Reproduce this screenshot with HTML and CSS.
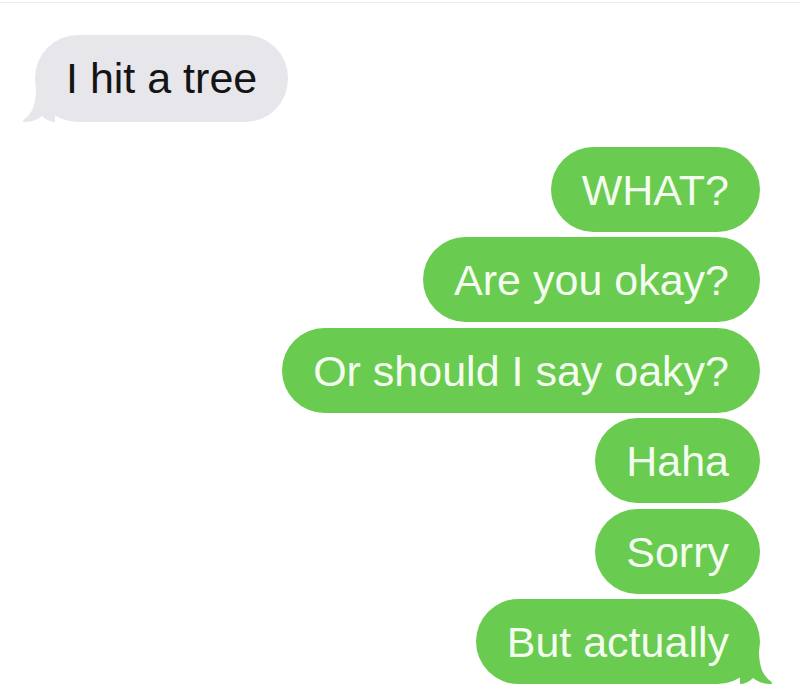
FILE: index.html
```html
<!DOCTYPE html>
<html>
<head>
<meta charset="utf-8">
<link rel="stylesheet" href="styles.css">
</head>
<body>
<div class="screen">
  <div class="topline"></div>
  <div class="thread">
    <div class="row in">
      <div class="bubble gray">I hit a tree
        <svg class="tail tail-left" viewBox="0 0 34 34" width="34" height="34"><path d="M15 0 C15 17 11 26 3 31.5 C1.5 32.5 1.5 34 3.5 34 C10 34 16 32 21 28 C25 32 30 34 34 34 L34 0 Z" fill="#e6e6eb"/></svg>
      </div>
    </div>
    <div class="outgoing">
      <div class="bubble green">WHAT?</div>
      <div class="bubble green">Are you okay?</div>
      <div class="bubble green">Or should I say oaky?</div>
      <div class="bubble green">Haha</div>
      <div class="bubble green">Sorry</div>
      <div class="bubble green">But actually
        <svg class="tail tail-right" viewBox="0 0 34 34" width="34" height="34"><path d="M19 0 C19 17 23 26 31 31.5 C32.5 32.5 32.5 34 30.5 34 C24 34 18 32 13 28 C9 32 4 34 0 34 L0 0 Z" fill="#69cb50"/></svg>
      </div>
    </div>
  </div>
</div>
</body>
</html>
```

FILE: styles.css
```css
html, body {
  margin: 0;
  padding: 0;
  background: #ffffff;
}

.screen {
  width: 800px;
  height: 693px;
  overflow: hidden;
  background: #ffffff;
  font-family: "Liberation Sans", Arial, Helvetica, sans-serif;
}

.topline {
  height: 2px;
  border-bottom: 1px solid #ececec;
}

.thread {
  display: flex;
  flex-direction: column;
  padding: 32px 40px 0 35px;
}

.row {
  display: flex;
}

.outgoing {
  display: flex;
  flex-direction: column;
  align-items: flex-end;
  gap: 5.4px;
  margin-top: 25px;
}

.bubble {
  position: relative;
  font-size: 43px;
  line-height: 50px;
  border-radius: 43px;
  white-space: nowrap;
}

.gray {
  background: #e6e6eb;
  color: #141414;
  padding: 18px 31px 19px 31px;
}

.green {
  background: #69cb50;
  color: #f4fcef;
  padding: 18px 31px 17px 31px;
}

.tail {
  position: absolute;
  bottom: 0;
  display: block;
}

.tail-left {
  left: -14px;
}

.tail-right {
  right: -14px;
}
```
